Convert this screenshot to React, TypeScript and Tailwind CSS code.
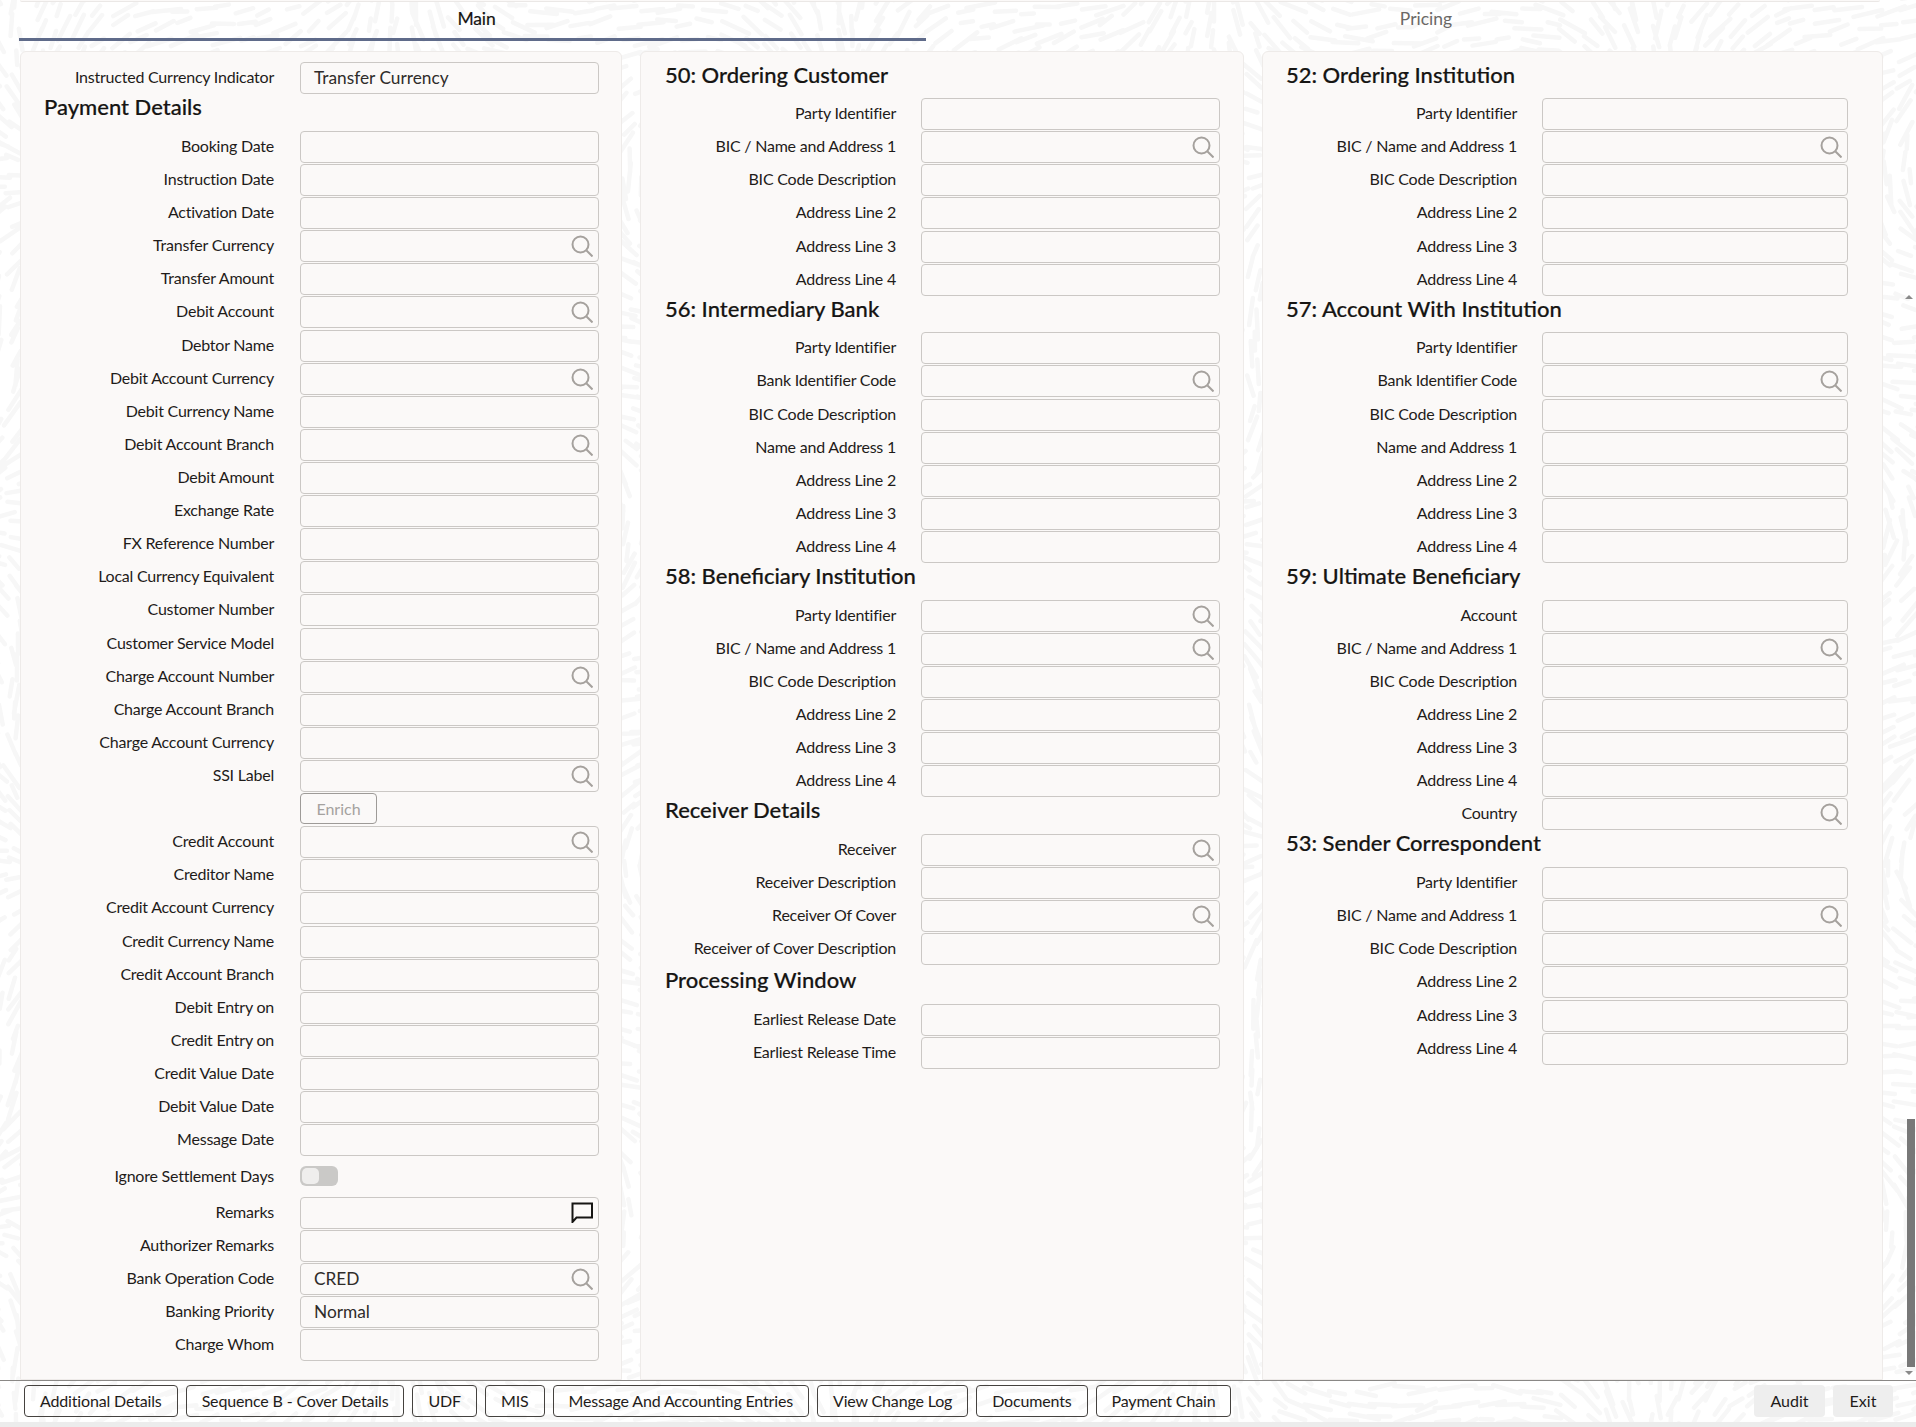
import React, { useMemo } from 'react';

type Field = { label: string; icon?: 'search' | 'chat'; value?: string };
type Section = { title: string; fields: Field[]; gap?: string };
type Widths = { label: string; input: string; title: string; icon: string; gap: string };

const toField = (s: string): Field => {
  if (s.endsWith('*')) return { label: s.slice(0, -1), icon: 'search' };
  return { label: s };
};
const fields = (...items: string[]) => items.map(toField);

const bicFields = fields('Party Identifier', 'BIC / Name and Address 1*', 'BIC Code Description', 'Address Line 2', 'Address Line 3', 'Address Line 4');
const bankFields = fields('Party Identifier', 'Bank Identifier Code*', 'BIC Code Description', 'Name and Address 1', 'Address Line 2', 'Address Line 3', 'Address Line 4');

const paymentTop = fields(
  'Booking Date', 'Instruction Date', 'Activation Date', 'Transfer Currency*', 'Transfer Amount', 'Debit Account*', 'Debtor Name',
  'Debit Account Currency*', 'Debit Currency Name', 'Debit Account Branch*', 'Debit Amount', 'Exchange Rate', 'FX Reference Number',
  'Local Currency Equivalent', 'Customer Number', 'Customer Service Model', 'Charge Account Number*', 'Charge Account Branch',
  'Charge Account Currency', 'SSI Label*',
);
const paymentMid = fields(
  'Credit Account*', 'Creditor Name', 'Credit Account Currency', 'Credit Currency Name', 'Credit Account Branch', 'Debit Entry on',
  'Credit Entry on', 'Credit Value Date', 'Debit Value Date', 'Message Date',
);

const middleSections: Section[] = [
  { title: '50: Ordering Customer', fields: bicFields },
  { title: '56: Intermediary Bank', fields: bankFields },
  {
    title: '58: Beneficiary Institution',
    fields: fields('Party Identifier*', 'BIC / Name and Address 1*', 'BIC Code Description', 'Address Line 2', 'Address Line 3', 'Address Line 4'),
  },
  { title: 'Receiver Details', fields: fields('Receiver*', 'Receiver Description', 'Receiver Of Cover*', 'Receiver of Cover Description') },
  { title: 'Processing Window', fields: fields('Earliest Release Date', 'Earliest Release Time'), gap: 'pt-[2px]' },
];

const rightSections: Section[] = [
  { title: '52: Ordering Institution', fields: bicFields },
  { title: '57: Account With Institution', fields: bankFields },
  {
    title: '59: Ultimate Beneficiary',
    fields: fields('Account', 'BIC / Name and Address 1*', 'BIC Code Description', 'Address Line 2', 'Address Line 3', 'Address Line 4', 'Country*'),
  },
  { title: '53: Sender Correspondent', fields: bicFields },
];

const footerButtons = ['Additional Details', 'Sequence B - Cover Details', 'UDF', 'MIS', 'Message And Accounting Entries', 'View Change Log', 'Documents', 'Payment Chain'];

const leftWidths: Widths = { label: 'w-[253px]', input: 'w-[299px]', title: 'pl-[23px]', icon: 'right-[5.5px]', gap: 'gap-[26px]' };
const middleWidths: Widths = { label: 'w-[255px]', input: 'w-[299px]', title: 'pl-[24px]', icon: 'right-[5px]', gap: 'gap-[25px]' };
const rightWidths: Widths = { label: 'w-[254px]', input: 'w-[306px]', title: 'pl-[23px]', icon: 'right-[5px]', gap: 'gap-[25px]' };

const headingClass = 'text-[22px] leading-[23px] font-medium text-[#161513] [-webkit-text-stroke:0.2px_#161513]';
const labelClass = 'text-right text-[16px] tracking-[-0.22px] text-[#1f1c1a] whitespace-nowrap';

const SearchIcon = () => (
  <svg viewBox="0 0 22 22" className="w-[22px] h-[22px]" fill="none" stroke="#a5a19d" strokeWidth="2">
    <circle cx="9.5" cy="9.5" r="8" />
    <path d="M15.5 15.5L21.5 21.5" />
  </svg>
);

const ChatIcon = () => (
  <svg viewBox="0 0 22 21" className="w-[22px] h-[21px]" fill="none" stroke="#161513" strokeWidth="2">
    <path d="M1.5 20V1.5H21V15.5H5.5Z" strokeLinejoin="miter" />
  </svg>
);

const Row = ({ field, w }: { field: Field; w: Widths }) => (
  <div className={`flex h-[33.11px] ${w.gap}`}>
    <div className={`${w.label} h-[32px] leading-[30px] ${labelClass}`}>{field.label}</div>
    <div className={`${w.input} relative h-[32px] rounded-[4px] border border-[#cbc8c5] bg-[#fbf9f8] pl-[13px] leading-[29px] text-[17.3px] text-[#2f2c2a]`}>
      {field.value}
      {field.icon && (
        <span className={`absolute top-[4px] ${w.icon}`}>
          {field.icon === 'search' ? <SearchIcon /> : <ChatIcon />}
        </span>
      )}
    </div>
  </div>
);

const SectionBlock = ({ section, w }: { section: Section; w: Widths }) => (
  <div className={section.gap}>
    <h2 className={`${w.title} h-[35.6px] ${headingClass}`}>{section.title}</h2>
    {section.fields.map((f) => (
      <Row key={f.label} field={f} w={w} />
    ))}
  </div>
);

// scattered dashes of the page's background texture
const Texture = () => {
  const d = useMemo(() => {
    let seed = 7;
    const rnd = () => {
      seed = (seed * 16807) % 2147483647;
      return seed / 2147483647;
    };
    const parts: string[] = [];
    for (let y = -10; y < 1440; y += 15) {
      for (let x = -10; x < 1930; x += 21) {
        const a = Math.sin(x / 130) * 1.6 + Math.cos(y / 110) * 1.4 + (rnd() - 0.5) * 0.5;
        const len = 6 + rnd() * 9;
        const cx = x + rnd() * 12;
        const cy = y + rnd() * 9;
        parts.push(`M${(cx - Math.cos(a) * len).toFixed(1)} ${(cy - Math.sin(a) * len).toFixed(1)}L${(cx + Math.cos(a) * len).toFixed(1)} ${(cy + Math.sin(a) * len).toFixed(1)}`);
      }
    }
    return parts.join('');
  }, []);
  return (
    <svg className="absolute inset-0 w-full h-full" viewBox="0 0 1916 1427" fill="none">
      <path d={d} stroke="#f7f7f7" strokeWidth="4.5" strokeLinecap="round" />
    </svg>
  );
};

export default function App() {
  return (
    <div className="relative w-[1916px] h-[1427px] overflow-hidden bg-white text-[#161513] font-['Lato','Liberation_Sans',sans-serif]">
      <Texture />

      <div className="relative flex flex-col h-full">
        <div className="ml-[20px] w-[1860px] h-[2px] shrink-0 rounded-b-[4px] border-b border-[#ebe8e6] bg-[#fbf9f8]" />

        <div className="flex pl-[19px] h-[39px] shrink-0">
          <div className="w-[907px] h-full border-b-[3px] border-[#5f6b8a] pl-[8px] text-center text-[17.5px] leading-[33px] tracking-[-0.1px] text-[#161513] [-webkit-text-stroke:0.2px_#161513]">Main</div>
          <div className="flex-1 pl-[10px] text-center text-[17.5px] leading-[33px] text-[#6b6966]">Pricing</div>
        </div>

        <main className="flex flex-1 gap-[18px] pl-[20px] pt-[10px] min-h-0">
          <section className="w-[602px] rounded-t-[6px] border border-[#eeebe9] bg-[#fbf9f8] pt-[10px]">
            <Row field={{ label: 'Instructed Currency Indicator', value: 'Transfer Currency' }} w={leftWidths} />
            <h2 className={`pl-[23px] h-[35.8px] ${headingClass}`}>Payment Details</h2>
            {paymentTop.map((f) => (
              <Row key={f.label} field={f} w={leftWidths} />
            ))}
            <div className="flex h-[33.11px] gap-[26px]">
              <div className="w-[253px]" />
              <button className="w-[77px] h-[31px] rounded-[4px] border border-[#9e9b98] text-[16px] text-[#a5a29f]">Enrich</button>
            </div>
            {paymentMid.map((f) => (
              <Row key={f.label} field={f} w={leftWidths} />
            ))}
            <div className="flex h-[39.5px] items-center gap-[26px] pb-[3px]">
              <div className={`w-[253px] ${labelClass}`}>Ignore Settlement Days</div>
              <div className="flex items-center w-[38px] h-[20px] rounded-[6px] bg-[#cac9c7] px-[2px]">
                <div className="w-[17px] h-[16px] rounded-[5px] bg-[#efeeed]" />
              </div>
            </div>
            <Row field={{ label: 'Remarks', icon: 'chat' }} w={leftWidths} />
            <Row field={{ label: 'Authorizer Remarks' }} w={leftWidths} />
            <Row field={{ label: 'Bank Operation Code', value: 'CRED', icon: 'search' }} w={leftWidths} />
            <Row field={{ label: 'Banking Priority', value: 'Normal' }} w={leftWidths} />
            <Row field={{ label: 'Charge Whom' }} w={leftWidths} />
          </section>

          <section className="w-[604px] rounded-t-[6px] border border-[#eeebe9] bg-[#fbf9f8] pt-[10.5px]">
            {middleSections.map((s) => (
              <SectionBlock key={s.title} section={s} w={middleWidths} />
            ))}
          </section>

          <section className="w-[621px] rounded-t-[6px] border border-[#eeebe9] bg-[#fbf9f8] pt-[10.5px]">
            {rightSections.map((s) => (
              <SectionBlock key={s.title} section={s} w={rightWidths} />
            ))}
          </section>
        </main>

        <footer className="flex h-[42px] shrink-0 items-start justify-between border-t-[1.5px] border-[#8a8886] pl-[24px] pr-[23px] pt-[3.5px]">
          <div className="flex gap-[8px]">
            {footerButtons.map((b) => (
              <button key={b} className="h-[32px] rounded-[4px] border border-[#45423f] px-[15px] text-[16px] tracking-[-0.16px] text-[#1f1c1a] whitespace-nowrap">{b}</button>
            ))}
          </div>
          <div className="flex gap-[8px]">
            <button className="w-[71px] h-[32px] rounded-[4px] bg-[#eeeeee] text-[16px] text-[#1f1c1a]">Audit</button>
            <button className="w-[60px] h-[32px] rounded-[4px] bg-[#eeeeee] text-[16px] text-[#1f1c1a]">Exit</button>
          </div>
        </footer>
        <div className="h-[5px] shrink-0 bg-[#ececec]" />
      </div>

      {/* page scrollbar */}
      <div className="absolute right-[1px] top-[1119px] w-[8px] h-[248px] bg-[#787878]" />
      <div className="absolute right-[3px] top-[295px] w-0 h-0 border-x-[4px] border-b-[4px] border-x-transparent border-b-[#8a8a8a]" />
      <div className="absolute right-[3px] top-[1371px] w-0 h-0 border-x-[4px] border-t-[4px] border-x-transparent border-t-[#8a8a8a]" />
    </div>
  );
}
